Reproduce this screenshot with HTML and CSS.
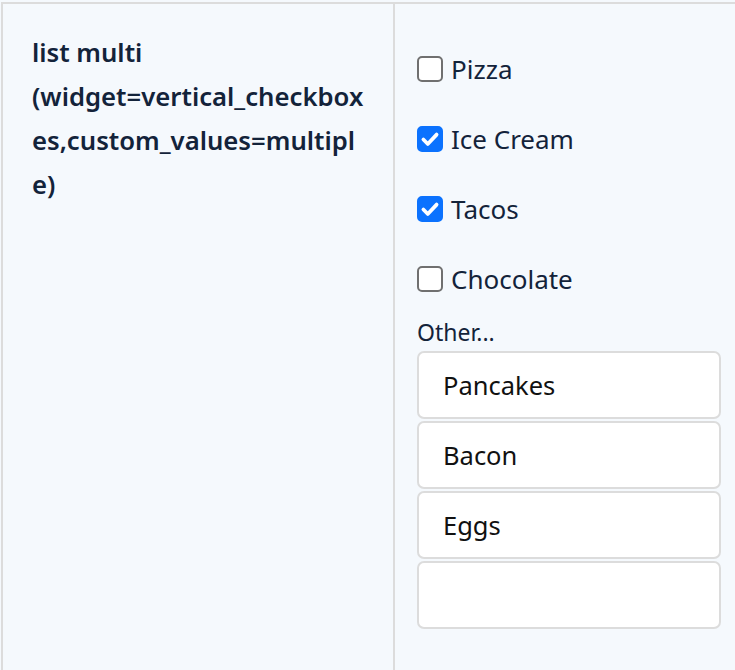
FILE: index.html
```html
<!DOCTYPE html>
<html>
<head>
<meta charset="utf-8">
<link rel="stylesheet" href="styles.css">
</head>
<body>
<div class="table">
  <div class="row">
    <div class="label-cell">list multi (widget=vertical_checkboxes,custom_values=multiple)</div>
    <div class="value-cell">
      <div class="options">
        <label class="option"><span class="box"></span><span>Pizza</span></label>
        <label class="option"><span class="box checked"><svg viewBox="0 0 20 20" width="22" height="22"><path d="M4 10.5l4 4 8-8.5" fill="none" stroke="#fff" stroke-width="3.4" stroke-linecap="round" stroke-linejoin="round"/></svg></span><span>Ice Cream</span></label>
        <label class="option"><span class="box checked"><svg viewBox="0 0 20 20" width="22" height="22"><path d="M4 10.5l4 4 8-8.5" fill="none" stroke="#fff" stroke-width="3.4" stroke-linecap="round" stroke-linejoin="round"/></svg></span><span>Tacos</span></label>
        <label class="option"><span class="box"></span><span>Chocolate</span></label>
      </div>
      <div class="other-label">Other...</div>
      <div class="inputs">
        <div class="input">Pancakes</div>
        <div class="input">Bacon</div>
        <div class="input">Eggs</div>
        <div class="input"></div>
      </div>
    </div>
  </div>
</div>
</body>
</html>
```

FILE: styles.css
```css
html, body {
  margin: 0;
  padding: 0;
  background: #f5f9fd;
  font-family: "Noto Sans", "Open Sans", sans-serif;
  color: #13233a;
}

.table {
  padding: 2px 0 0 1px;
}

.row {
  display: flex;
  border-top: 2px solid #dcdcdc;
  border-left: 2px solid #dcdcdc;
  min-height: 670px;
}

.label-cell {
  box-sizing: border-box;
  width: 392px;
  flex: none;
  border-right: 2px solid #dcdcdc;
  padding: 27px 27px 0 29px;
  font-size: 25.7px;
  font-weight: 600;
  line-height: 44px;
  overflow-wrap: anywhere;
}

.value-cell {
  flex: 1;
  padding: 45px 14px 0 22px;
}

.options {
  display: flex;
  flex-direction: column;
  gap: 30px;
}

.option {
  display: flex;
  align-items: center;
  height: 40px;
  font-size: 26px;
  gap: 8px;
}

.box {
  box-sizing: border-box;
  width: 26px;
  height: 26px;
  border: 2px solid #707070;
  border-radius: 5px;
  background: #fff;
  display: flex;
  align-items: center;
  justify-content: center;
}

.box.checked {
  background: #0b72fe;
  border-color: #0b72fe;
}

.other-label {
  margin-top: 17px;
  font-size: 23px;
  line-height: 32px;
  margin-bottom: 3px;
}

.inputs {
  display: flex;
  flex-direction: column;
  gap: 2px;
}

.input {
  box-sizing: border-box;
  height: 68px;
  border: 2px solid #dcdcdc;
  border-radius: 7px;
  background: #fff;
  padding-left: 24px;
  font-size: 25.5px;
  line-height: 64px;
  color: #111;
}
```
